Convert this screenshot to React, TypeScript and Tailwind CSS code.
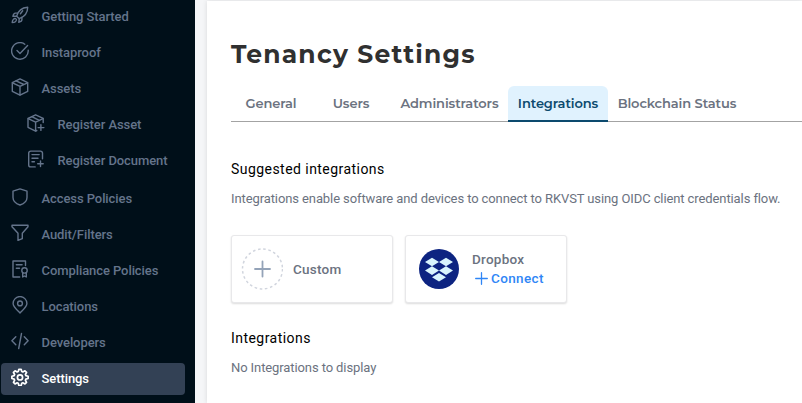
import type { ReactNode } from "react";

const heading = "font-['Montserrat','Inter',sans-serif]";

function Icon({ children }: { children: ReactNode }) {
  return (
    <svg
      viewBox="0 0 18 18"
      className="relative -top-[2px] h-[18px] w-[18px] shrink-0"
      fill="none"
      stroke="currentColor"
      strokeWidth="1.4"
      strokeLinecap="round"
      strokeLinejoin="round"
    >
      {children}
    </svg>
  );
}

const rocket = (
  <>
    <path d="M5.7 10.2C6.8 5.8 10.3 1.600 16.700 1.200c0 5.500-3.700 9.600-8.400 11.500z" />
    <path d="M6.500 7.100H4.300C3.200 7.100 2.200 8.900 1.900 10.300l3.700-.1M10.900 11.500v2.300c0 1.100-1.300 2-3.100 2.500l.5-3.600" />
    <path d="M4.600 12.600c-1.700-.3-3.200 1-3.400 4 2.800 0 4.400-1.400 4.200-3.200" />
    <path d="m11.700 4.800-2.300 2.900" />
  </>
);
const check = (
  <>
    <path d="M13.800 2.200A8.300 8.300 0 1 0 17.200 8.200" />
    <path d="m6 8.400 3 3L16.600 3.600" />
  </>
);
const cube = (
  <>
    <path d="m9 .9 7.700 3.700v8.700L9 17.100l-7.700-3.800V4.600z" />
    <path d="M1.500 4.800 9 8.300l7.500-3.500M9 8.300v8.600M5.100 2.800l7.700 3.700" />
  </>
);
const cubePlus = (
  <>
    <path d="M16.200 8.500V4.300L8.600.8 1 4.500v8.800l7.600 3.800 1.200-.6" />
    <path d="m1.200 4.700 7.400 3.500 7.400-3.600M8.600 8.200v8.700M4.800 2.700l7.500 3.700M13.900 10.800v5.600M11.100 13.600h5.800" />
  </>
);
const docPlus = (
  <>
    <path d="M15.500 8.700V3.100a2 2 0 0 0-2-2H3.700a2 2 0 0 0-2 2v11.800a2 2 0 0 0 2 2h4.500" />
    <path d="M5 4.600h7.200M5 8.200h6M5 11.700h2.400M13.500 11v5.500M10.700 13.700h5.500" />
  </>
);
const shield = (
  <path d="M9 .9 16 3.200v6.200c0 4-3.300 6.300-7 7.600-3.700-1.300-7-3.600-7-7.600V3.200z" />
);
const funnel = (
  <path d="M1 1.300h16v1.500l-5.700 6.500v5.400L7 16.400V9.300L1 2.800z" />
);
const compliance = (
  <>
    <path d="M14.500 5.500V1H2v16h6.700M5.300 4.700h5.800M5.300 8.200h3.200" />
    <circle cx="13.500" cy="10.400" r="2.700" />
    <path d="M11.700 12.700V17l1.800-1 1.800 1v-4.300" />
  </>
);
const pin = (
  <>
    <path d="M9 17C5.500 13.500 2.100 10.700 2.100 7.500a6.900 6.900 0 0 1 13.800 0C15.900 10.700 12.500 13.500 9 17Z" />
    <circle cx="9" cy="7.400" r="2.400" />
  </>
);
const code = <path d="M4.800 4.700.9 8.800l3.900 4M13.300 4.700l3.800 4.100-3.800 4M10.500 1.500 7.700 16.500" />;

// Eight teeth, each a short flat top between two lower shoulders.
const gearPoints = Array.from({ length: 8 }, (_, tooth) =>
  [
    [-17, 6.1],
    [-8, 8.2],
    [8, 8.2],
    [17, 6.1],
  ]
    .map(([offset, radius]) => {
      const angle = ((tooth * 45 + offset) * Math.PI) / 180;
      return `${(9 + radius * Math.cos(angle)).toFixed(2)},${(9 + radius * Math.sin(angle)).toFixed(2)}`;
    })
    .join(" "),
).join(" ");

const gear = (
  <g strokeWidth="1.700" transform="translate(0 .4)">
    <polygon points={gearPoints} />
    <circle cx="9" cy="9" r="2.600" />
  </g>
);

const items = [
  { label: "Getting Started", icon: rocket },
  { label: "Instaproof", icon: check },
  { label: "Assets", icon: cube },
  { label: "Register Asset", icon: cubePlus, child: true },
  { label: "Register Document", icon: docPlus, child: true },
  { label: "Access Policies", icon: shield, spaced: true },
  { label: "Audit/Filters", icon: funnel },
  { label: "Compliance Policies", icon: compliance },
  { label: "Locations", icon: pin },
  { label: "Developers", icon: code },
  { label: "Settings", icon: gear, active: true },
];

function Sidebar() {
  return (
    <nav className="flex h-full w-[195px] shrink-0 flex-col gap-1 bg-[#000f19] pt-px pl-px">
      {items.map((item) => (
        <a
          key={item.label}
          className={`flex h-8 w-[184px] shrink-0 items-center gap-[13px] rounded text-[13px] font-medium tracking-[-0.08px] whitespace-nowrap ${
            item.child ? "pl-[25.5px]" : "pl-[9.5px]"
          } ${item.spaced ? "mt-[2px]" : ""} ${
            item.active ? "bg-[#334155] text-white" : "text-[#64748b]"
          }`}
        >
          <Icon>{item.icon}</Icon>
          <span className="leading-4">{item.label}</span>
        </a>
      ))}
    </nav>
  );
}

const tabs = [
  { label: "General", width: "w-20" },
  { label: "Users", width: "w-20" },
  { label: "Administrators", width: "w-[117px]" },
  { label: "Integrations", width: "w-[100px]", active: true },
  { label: "Blockchain Status", width: "w-[138px]" },
];

function Card({ children }: { children: ReactNode }) {
  return (
    <div className="flex h-[68px] w-[162px] items-center rounded-[3px] border border-[#e8e8ea] bg-white shadow-[0_1px_2px_rgba(0,0,0,0.14)]">
      {children}
    </div>
  );
}

function DropboxLogo() {
  return (
    <svg viewBox="0 0 40 40" className="ml-[13px] h-10 w-10 shrink-0">
      <circle cx="20" cy="20" r="20" fill="#0d2481" />
      <path
        fill="#d9f5fd"
        d="m13 8.700 7 4.300-7 4.300L6 13zM27 8.700l7 4.300-7 4.300-7-4.300zM13 17.300l7 4.300-7 4.300-7-4.300zM27 17.300l7 4.300-7 4.300-7-4.300zM20 24l7 4.300-7 4.300-7-4.300z"
      />
    </svg>
  );
}

export default function App() {
  return (
    <div className="flex h-[403px] w-[802px] overflow-hidden bg-[#f5f6f8] font-['Roboto',sans-serif]">
      <Sidebar />
      <main className="mt-px ml-3 flex min-w-0 flex-1 flex-col bg-white pl-6 shadow-[0_0_5px_rgba(0,0,0,0.12)]">
        <h1 className={`mt-9 text-[25px] leading-[34px] font-bold tracking-[1.2px] text-[#303030] ${heading}`}>
          Tenancy Settings
        </h1>
        <div className="mt-[15px] flex h-9 border-b border-[#a3a3a3]">
          {tabs.map((tab) => (
            <div
              key={tab.label}
              className={`flex h-9 shrink-0 items-center justify-center rounded-t-md border-b-2 pt-px text-[13px] font-semibold tracking-[-0.1px] whitespace-nowrap ${heading} ${tab.width} ${
                tab.active
                  ? "border-[#0c4a6e] bg-[#e0f2fe] text-[#0c4a6e]"
                  : "border-transparent text-[#6b7280]"
              }`}
            >
              {tab.label}
            </div>
          ))}
        </div>
        <h2 className="mt-[37px] text-[14px] leading-5 font-normal tracking-[0.45px] text-black">Suggested integrations</h2>
        <p className="mt-[10px] text-[13px] leading-5 tracking-[-0.1px] whitespace-nowrap text-[#6b7280]">
          Integrations enable software and devices to connect to RKVST using OIDC client credentials flow.
        </p>
        <div className="mt-[26px] flex gap-3">
          <Card>
            <svg viewBox="0 0 42 42" className="ml-[9px] h-[42px] w-[42px] shrink-0" fill="none">
              <circle cx="21.500" cy="21" r="20" stroke="#d1d5de" strokeWidth="1.500" strokeDasharray="2.600 2.640" />
              <path d="M21.500 13.500v15M14 21h15" stroke="#94a3b8" strokeWidth="1.800" strokeLinecap="round" />
            </svg>
            <span className="ml-[10px] text-[13.5px] leading-[19px] font-medium tracking-[0.25px] text-[#6b7280]">Custom</span>
          </Card>
          <Card>
            <DropboxLogo />
            <div className="ml-[13px] flex flex-col">
              <span className="text-[13.5px] leading-[19px] font-medium tracking-[0.25px] text-[#6b7280]">Dropbox</span>
              <span className="flex items-center gap-[3px] pl-[3px] text-[13.5px] leading-[19px] font-medium tracking-[0.35px] text-[#2f86f6]">
                <svg viewBox="0 0 13 13" className="h-[13px] w-[13px]" stroke="currentColor" strokeWidth="1.300" strokeLinecap="round">
                  <path d="M6.500 .7v11.600M.7 6.500h11.600" />
                </svg>
                Connect
              </span>
            </div>
          </Card>
        </div>
        <h2 className="mt-[25px] text-[14px] leading-5 font-normal tracking-[0.45px] text-black">Integrations</h2>
        <p className="mt-[10px] text-[13px] leading-5 tracking-[-0.1px] text-[#6b7280]">No Integrations to display</p>
      </main>
    </div>
  );
}
